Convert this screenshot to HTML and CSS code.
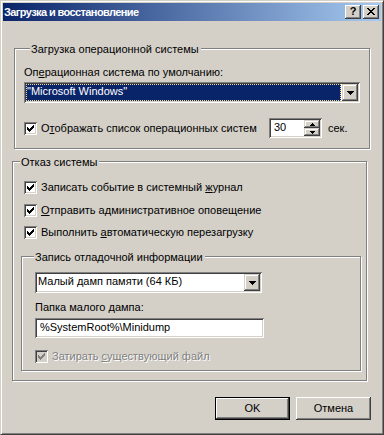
FILE: index.html
```html
<!DOCTYPE html>
<html lang="ru">
<head>
    <meta charset="UTF-8">
    <title>Загрузка и восстановление</title>
    <link rel="stylesheet" href="styles.css">
</head>
<body>
    <div class="window">
        <div class="titlebar">
            <span class="title">Загрузка и восстановление</span>
            <button class="cap-btn help">?</button>
            <button class="cap-btn close">
                <svg width="8" height="7" viewBox="0 0 8 7"><path d="M0 0h2v1H0zM6 0h2v1H6zM1 1h2v1H1zM5 1h2v1H5zM2 2h4v1H2zM3 3h2v1H3zM2 4h4v1H2zM1 5h2v1H1zM5 5h2v1H5zM0 6h2v1H0zM6 6h2v1H6z"/></svg>
            </button>
        </div>

        <div class="client">
            <!-- boot -->
            <div class="group group-boot">
                <div class="legend">Загрузка операционной системы</div>
                <div class="label label-os">Оп<u>е</u>рационная система по умолчанию:</div>
                <div class="combo combo-os">
                    <div class="combo-value selected">"Microsoft Windows"</div>
                    <div class="combo-btn">
                        <svg width="7" height="4" viewBox="0 0 7 4"><path d="M0 0h7v1H0zM1 1h5v1H1zM2 2h3v1H2zM3 3h1v1H3z"/></svg>
                    </div>
                </div>
                <div class="check-row row-list">
                    <span class="checkbox">
                        <svg width="7" height="7" viewBox="0 0 7 7"><path d="M6 0h1v1H6zM5 1h2v1H5zM0 2h1v1H0zM4 2h3v1H4zM0 3h2v1H0zM3 3h3v1H3zM0 4h5v1H0zM1 5h3v1H1zM2 6h1v1H2z"/></svg>
                    </span>
                    <span class="check-text list-text">О<u>т</u>ображать список операционных систем</span>
                    <div class="spin">
                        <div class="spin-value">30</div>
                        <div class="spin-arrows">
                            <div class="spin-btn"><svg width="5" height="3" viewBox="0 0 5 3"><path d="M2 0h1v1H2zM1 1h3v1H1zM0 2h5v1H0z"/></svg></div>
                            <div class="spin-btn"><svg width="5" height="3" viewBox="0 0 5 3"><path d="M0 0h5v1H0zM1 1h3v1H1zM2 2h1v1H2z"/></svg></div>
                        </div>
                    </div>
                    <span class="unit">сек.</span>
                </div>
            </div>

            <!-- failure -->
            <div class="group group-fail">
                <div class="legend">Отказ системы</div>
                <div class="check-row row-log">
                    <span class="checkbox">
                        <svg width="7" height="7" viewBox="0 0 7 7"><path d="M6 0h1v1H6zM5 1h2v1H5zM0 2h1v1H0zM4 2h3v1H4zM0 3h2v1H0zM3 3h3v1H3zM0 4h5v1H0zM1 5h3v1H1zM2 6h1v1H2z"/></svg>
                    </span>
                    <span class="check-text">Записать событие в системный <u>ж</u>урнал</span>
                </div>
                <div class="check-row row-alert">
                    <span class="checkbox">
                        <svg width="7" height="7" viewBox="0 0 7 7"><path d="M6 0h1v1H6zM5 1h2v1H5zM0 2h1v1H0zM4 2h3v1H4zM0 3h2v1H0zM3 3h3v1H3zM0 4h5v1H0zM1 5h3v1H1zM2 6h1v1H2z"/></svg>
                    </span>
                    <span class="check-text"><u>О</u>тправить административное оповещение</span>
                </div>
                <div class="check-row row-reboot">
                    <span class="checkbox">
                        <svg width="7" height="7" viewBox="0 0 7 7"><path d="M6 0h1v1H6zM5 1h2v1H5zM0 2h1v1H0zM4 2h3v1H4zM0 3h2v1H0zM3 3h3v1H3zM0 4h5v1H0zM1 5h3v1H1zM2 6h1v1H2z"/></svg>
                    </span>
                    <span class="check-text">Выполнить <u>а</u>втоматическую перезагрузку</span>
                </div>

                <!-- debug info -->
                <div class="group group-dump">
                    <div class="legend">Запись отладочной информации</div>
                    <div class="combo combo-dump">
                        <div class="combo-value">Малый дамп памяти (64 КБ)</div>
                        <div class="combo-btn">
                            <svg width="7" height="4" viewBox="0 0 7 4"><path d="M0 0h7v1H0zM1 1h5v1H1zM2 2h3v1H2zM3 3h1v1H3z"/></svg>
                        </div>
                    </div>
                    <div class="label label-dir">Папка малого дампа:</div>
                    <div class="edit">%SystemRoot%\Minidump</div>
                    <div class="check-row row-overwrite disabled">
                        <span class="checkbox">
                            <svg width="7" height="7" viewBox="0 0 7 7"><path d="M6 0h1v1H6zM5 1h2v1H5zM0 2h1v1H0zM4 2h3v1H4zM0 3h2v1H0zM3 3h3v1H3zM0 4h5v1H0zM1 5h3v1H1zM2 6h1v1H2z"/></svg>
                        </span>
                        <span class="check-text">Затирать <u>с</u>уществующий файл</span>
                    </div>
                </div>
            </div>

            <div class="buttons">
                <button class="btn btn-default">OK</button>
                <button class="btn">Отмена</button>
            </div>
        </div>
    </div>
</body>
</html>
```

FILE: styles.css
```css
* {
    box-sizing: border-box;
}
body {
    margin: 0;
    font-family: "Liberation Sans", Arial, sans-serif;
    font-size: 11px;
    line-height: 13px;
    color: #000;
    background: #d4d0c8;
}
svg {
    display: block;
    shape-rendering: crispEdges;
}
.window {
    width: 384px;
    height: 435px;
    padding: 2px;
    background: #d4d0c8;
    border: 1px solid;
    border-color: #d4d0c8 #404040 #404040 #d4d0c8;
    box-shadow: inset 1px 1px #fff, inset -1px -1px #808080;
    display: flex;
    flex-direction: column;
}

/* title bar */
.titlebar {
    height: 18px;
    flex: none;
    display: flex;
    align-items: center;
    padding: 0 2px 0 1px;
    background: linear-gradient(to right, #0a246a, #a6caf0);
}
.title {
    flex: 1;
    color: #fff;
    font-weight: bold;
    letter-spacing: -0.6px;
}
.cap-btn {
    width: 16px;
    height: 14px;
    padding: 0;
    border: none;
    background: #d4d0c8;
    box-shadow: inset -1px -1px #404040, inset 1px 1px #fff, inset -2px -2px #808080;
    display: flex;
    align-items: center;
    justify-content: center;
    font: bold 11px/13px "Liberation Sans", Arial, sans-serif;
    color: #000;
}
.cap-btn.help {
    margin-right: 2px;
    padding-bottom: 1px;
}
.cap-btn.close svg {
    margin: 0 0 1px 0;
}

/* dialog body */
.client {
    flex: 1;
    display: flex;
    flex-direction: column;
    align-items: flex-start;
}
.group {
    border: 1px solid #808080;
    box-shadow: 1px 1px #fff, inset 1px 1px #fff;
    display: flex;
    flex-direction: column;
    align-items: flex-start;
    flex: none;
}
.legend {
    margin: -6px 0 0 6px;
    padding: 0 2px 0 1px;
    background: #d4d0c8;
}
.group-boot {
    margin: 27px 0 0 11px;
    width: 356px;
    height: 101px;
    padding-left: 9px;
}
.group-fail {
    margin: 12px 0 0 9px;
    width: 355px;
    height: 220px;
    padding-left: 8px;
}
.group-fail .legend {
    margin-left: -1px;
}
.group-dump {
    margin-top: 17px;
    width: 340px;
    height: 115px;
    padding-left: 13px;
}
.label-os {
    margin-top: 10px;
}
.label-dir {
    margin-top: 8px;
}

/* sunken fields */
.combo,
.edit,
.spin {
    background: #fff;
    padding: 2px;
    box-shadow: inset 1px 1px #808080, inset -1px -1px #fff, inset 2px 2px #404040, inset -2px -2px #d4d0c8;
    display: flex;
}
.combo {
    height: 21px;
}
.combo-os {
    margin-top: 3px;
    width: 336px;
}
.combo-dump {
    margin-top: 8px;
    width: 227px;
}
.combo-value {
    flex: 1;
    padding: 1px 0 0 1px;
    line-height: 13px;
    margin-right: 1px;
}
.combo-value.selected {
    background: #0a246a;
    color: #fff;
    border: 1px dotted #f5db95;
    padding: 0;
}
.combo-btn,
.spin-btn {
    background: #d4d0c8;
    box-shadow: inset -1px -1px #404040, inset 1px 1px #d4d0c8, inset -2px -2px #808080, inset 2px 2px #fff;
    display: flex;
    align-items: center;
    justify-content: center;
}
.combo-btn {
    width: 16px;
    flex: none;
}
.edit {
    margin-top: 4px;
    width: 229px;
    height: 20px;
    padding: 3px 0 0 5px;
}

/* checkboxes */
.check-row {
    display: flex;
    align-items: center;
    flex: none;
}
.checkbox {
    width: 13px;
    height: 13px;
    flex: none;
    background: #fff;
    box-shadow: inset 1px 1px #808080, inset -1px -1px #fff, inset 2px 2px #404040, inset -2px -2px #d4d0c8;
    padding: 3px;
    margin-right: 4px;
}
.row-list {
    margin-top: 15px;
}
.list-text {
    width: 228px;
}
.row-log {
    margin: 12px 0 0 3px;
}
.row-alert {
    margin: 10px 0 0 3px;
}
.row-reboot {
    margin: 9px 0 0 3px;
}
.row-overwrite {
    margin-top: 12px;
}
.disabled .checkbox {
    background: #d4d0c8;
}
.disabled .checkbox svg {
    fill: #808080;
}
.disabled .check-text {
    color: #808080;
    text-shadow: 1px 1px 0 #fff;
}

/* spin box */
.spin {
    width: 53px;
    height: 20px;
}
.spin-value {
    flex: 1;
    padding: 1px 0 0 3px;
}
.spin-arrows {
    width: 16px;
    display: flex;
    flex-direction: column;
}
.spin-btn {
    flex: 1;
}
.unit {
    margin-left: 6px;
}

/* buttons */
.buttons {
    align-self: stretch;
    display: flex;
    justify-content: flex-end;
    gap: 6px;
    margin-top: 16px;
    padding-right: 10px;
}
.btn {
    width: 75px;
    height: 23px;
    padding: 0;
    border: none;
    background: #d4d0c8;
    box-shadow: inset -1px -1px #404040, inset 1px 1px #fff, inset -2px -2px #808080;
    font: 11px/13px "Liberation Sans", Arial, sans-serif;
    color: #000;
}
.btn-default {
    border: 1px solid #000;
}
```
